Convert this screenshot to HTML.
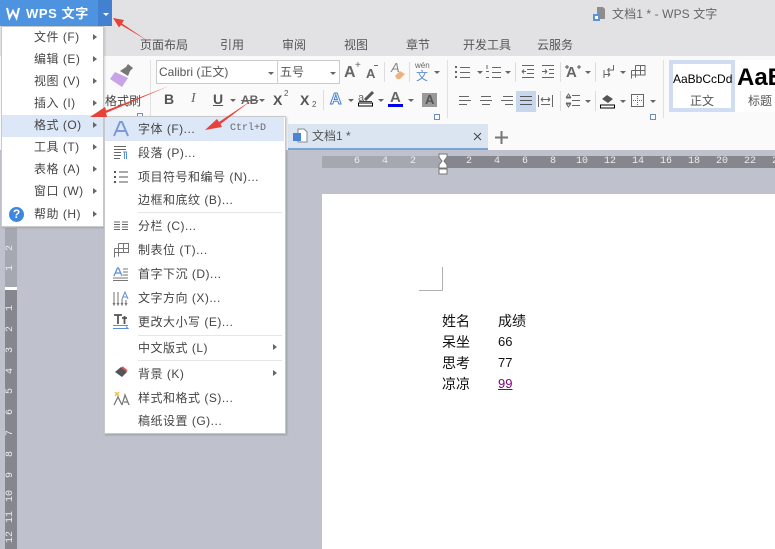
<!DOCTYPE html>
<html><head><meta charset="utf-8">
<style>
html,body{margin:0;padding:0}
body{width:775px;height:549px;overflow:hidden;position:relative;background:#bfc2cc;font-family:"Liberation Sans","WenQuanYi Zen Hei","Noto Sans CJK SC",sans-serif;font-size:12px;color:#444}
.a{position:absolute}
.t{position:absolute;white-space:nowrap;line-height:16px;color:#454545}
.m{font-size:12px;letter-spacing:.5px}
.tab{position:absolute;top:37px;font-size:12px;line-height:16px;color:#555;white-space:nowrap}
.arr{position:absolute;width:0;height:0;border-left:4px solid #666;border-top:3.5px solid transparent;border-bottom:3.5px solid transparent}
.dd{position:absolute;width:0;height:0;border-top:3px solid #666;border-left:3px solid transparent;border-right:3px solid transparent}
.sep{position:absolute;background:#e6e6e6}
.vs{position:absolute;width:1px;height:20px;background:#ddd}
.lc{position:absolute;width:4px;height:4px;border:1px solid #6b8fc5;border-top-color:#6b8fc5}
.r{position:absolute;font-size:10px;color:#eee;line-height:12px;top:156px;width:20px;text-align:center;font-family:"Liberation Mono",monospace}
.v{position:absolute;left:5px;width:12px;height:12px;font-size:10px;color:#eee;line-height:12px;text-align:center;transform:rotate(-90deg);font-family:"Liberation Mono",monospace}
svg{position:absolute;overflow:visible}
</style></head><body>
<div class="a" style="left:0;top:0;width:775px;height:56px;background:#e2e2e4"></div>
<div class="a" style="left:0;top:56px;width:775px;height:94px;background:#fafafa"></div>

<div class="a" style="left:0;top:0;width:98px;height:26px;background:#4e93e0"></div>
<div class="a" style="left:98px;top:0;width:14px;height:26px;background:#4380d0"></div>
<svg style="left:6px;top:7px" width="14" height="13"><path d="M1 1 L3.500 11 L7 4 L10.500 11 L13 1" fill="none" stroke="#fff" stroke-width="2"/></svg>
<div class="t" style="left:26px;top:6px;color:#fff;font-size:13px;font-weight:bold;letter-spacing:.6px">WPS 文字</div>
<div class="dd" style="left:103px;top:13px;border-top-color:#fff"></div>

<svg style="left:592px;top:6px" width="14" height="15"><path d="M5 1h6l2 2v10H5z" fill="#8d8d8d"/><rect x="1" y="8" width="7" height="7" fill="#5b93d8"/><rect x="3" y="10" width="3" height="3" fill="#fff"/></svg>
<div class="t" style="left:612px;top:6px;color:#666;letter-spacing:.1px">文档1 * - WPS 文字</div>

<div class="tab" style="left:140px">页面布局</div>
<div class="tab" style="left:220px">引用</div>
<div class="tab" style="left:282px">审阅</div>
<div class="tab" style="left:344px">视图</div>
<div class="tab" style="left:406px">章节</div>
<div class="tab" style="left:463px">开发工具</div>
<div class="tab" style="left:537px">云服务</div>

<!-- ribbon left -->
<svg style="left:108px;top:62px" width="30" height="30"><path d="M12 9l6-4 2-3 5 4-3 3-2 5z" fill="#777"/><path d="M7 10l13 6-6 9-12-8z" fill="#c9a3e8"/></svg>
<div class="t" style="left:105px;top:93px">格式刷</div>
<div class="lc" style="left:137px;top:113px"></div>
<div class="a" style="left:150px;top:60px;width:1px;height:58px;background:#e2e2e2"></div>
<div class="a" style="left:156px;top:60px;width:120px;height:22px;border:1px solid #ccc;background:#fff"></div>
<div class="a" style="left:277px;top:60px;width:61px;height:22px;border:1px solid #ccc;border-left:1px solid #ccc;background:#fff"></div>
<div class="t" style="left:159px;top:64px;color:#555">Calibri (正文)</div>
<div class="dd" style="left:268px;top:72px"></div>
<div class="t" style="left:280px;top:64px;color:#555">五号</div>
<div class="dd" style="left:330px;top:72px"></div>
<div class="t" style="left:344px;top:65px;font-size:16px;font-weight:bold;color:#666">A</div>
<div class="t" style="left:355px;top:58px;font-size:10px;color:#666">+</div>
<div class="t" style="left:366px;top:66px;font-size:13px;font-weight:bold;color:#666">A</div>
<div class="a" style="left:374px;top:65px;width:4px;height:1px;background:#666"></div>
<div class="vs" style="left:384px;top:62px"></div>
<div class="t" style="left:391px;top:60px;font-size:13px;font-style:italic;color:#888">A</div>
<svg style="left:394px;top:70px" width="12" height="10"><path d="M1 6l5-5 5 3-5 5H3z" fill="#efb27a"/></svg>
<div class="vs" style="left:409px;top:62px"></div>
<div class="t" style="left:415px;top:61px;font-size:8px;color:#666;line-height:10px">wén</div>
<div class="t" style="left:416px;top:68px;font-size:12px;color:#5c8fd6">文</div>
<div class="dd" style="left:434px;top:71px"></div>

<div class="t" style="left:164px;top:91px;font-size:14px;font-weight:bold;color:#555">B</div>
<div class="t" style="left:191px;top:91px;font-size:14px;font-style:italic;font-family:'Liberation Serif',serif;color:#666">I</div>
<div class="t" style="left:213px;top:91px;font-size:14px;font-weight:bold;color:#555;text-decoration:underline">U</div>
<div class="dd" style="left:230px;top:99px"></div>
<div class="t" style="left:241px;top:92px;font-size:12px;font-weight:bold;color:#666;text-decoration:line-through">AB</div>
<div class="dd" style="left:259px;top:99px"></div>
<div class="t" style="left:273px;top:92px;font-size:14px;font-weight:bold;color:#555">X</div>
<div class="t" style="left:284px;top:86px;font-size:8px;color:#555">2</div>
<div class="t" style="left:300px;top:92px;font-size:14px;font-weight:bold;color:#555">X</div>
<div class="t" style="left:312px;top:97px;font-size:8px;color:#555">2</div>
<div class="vs" style="left:323px;top:90px"></div>
<div class="t" style="left:330px;top:92px;font-size:16px;font-weight:bold;color:#fff;-webkit-text-stroke:1px #4a7fd0">A</div>
<div class="dd" style="left:348px;top:99px"></div>
<div class="t" style="left:358px;top:90px;font-size:11px;color:#666">a</div>
<svg style="left:358px;top:88px" width="16" height="19"><path d="M7 12L15 4" stroke="#555" stroke-width="3"/><path d="M1 13.500h13" stroke="#444"/><rect x="0.500" y="15" width="14" height="3" fill="#fff" stroke="#000"/></svg>
<div class="dd" style="left:378px;top:99px"></div>
<div class="t" style="left:390px;top:90px;font-size:15px;font-weight:bold;color:#666">A</div>
<div class="a" style="left:388px;top:104px;width:15px;height:3px;background:#0000e6"></div>
<div class="dd" style="left:408px;top:99px"></div>
<div class="a" style="left:422px;top:93px;width:15px;height:14px;background:#999"></div>
<div class="t" style="left:425px;top:92px;font-size:13px;font-weight:bold;color:#555">A</div>
<div class="lc" style="left:434px;top:114px"></div>
<div class="a" style="left:447px;top:60px;width:1px;height:58px;background:#e0e0e0"></div>

<!-- paragraph group -->
<div class="a" style="left:516px;top:91px;width:20px;height:21px;background:#c6d7ee"></div>
<svg style="left:0;top:0;fill:none;stroke:#666" width="775" height="150">
<path d="M456 66v2M456 71v2M456 76v2" stroke-width="2"/><path d="M460 67.500h10M460 72.500h10M460 77.500h10"/>
<path d="M487 65v4M486 71.500h3M486 77.500h3" /><path d="M492 67.500h9M492 72.500h9M492 77.500h9"/>
<path d="M522 65.500h12M527 69.500h7M527 73.500h7M522 77.500h12M522 71.500h4M522 71.500l2-2M522 71.500l2 2"/>
<path d="M542 65.500h12M549 69.500h5M549 73.500h5M542 77.500h12M542 71.500h5M547 71.500l-2-2M547 71.500l-2 2"/>
<path d="M613.500 65v5h-6M607.500 70l2-2M607.500 70l2 2M604 74.500h6M610 74.500l-2-2M610 74.500l-2 2M604 70v8"/>
<path d="M635.500 65.500h9.500v9.500h-13M631.500 70.500h13.500M635.500 65.500v12M640.500 65.500v9.500M631.500 70.500v8"/>
<path d="M459 96.500h10M459 100.500h12M459 104.500h8"/>
<path d="M481 96.500h10M480 100.500h12M482 104.500h8"/>
<path d="M503 96.500h10M501 100.500h12M505 104.500h8"/>
<path d="M520 96.500h12M520 100.500h12M520 104.500h12" stroke="#555"/>
<path d="M538.500 95v12M552.500 95v12M541 99.500h9M541 99.500l2-2M541 99.500l2 2M550 99.500l-2-2M550 99.500l-2 2M541 104.500h9"/>
<path d="M572 95.500h8M572 100.500h8M572 105.500h8M566 98h5M566 103h5M568.500 94l-2 3h4zM568.500 107l-2-3h4z"/>
<rect x="631.500" y="94.500" width="12" height="12"/>
<path d="M637.500 96v9M633 100.500h9" stroke-dasharray="1 1"/>
</svg>
<div class="dd" style="left:477px;top:71px"></div>
<div class="dd" style="left:505px;top:71px"></div>
<div class="vs" style="left:515px;top:62px"></div>
<div class="vs" style="left:560px;top:62px"></div>
<div class="vs" style="left:560px;top:91px"></div>
<div class="t" style="left:566px;top:65px;font-size:15px;font-weight:bold;color:#666">A</div>
<svg style="left:565px;top:64px;fill:none;stroke:#555" width="18" height="8"><path d="M0 3h4M2 1v4M12 3h4M14 1v4"/></svg>
<div class="dd" style="left:585px;top:71px"></div>
<div class="dd" style="left:585px;top:100px"></div>
<div class="vs" style="left:595px;top:62px"></div>
<div class="vs" style="left:595px;top:91px"></div>
<div class="dd" style="left:620px;top:71px"></div>
<svg style="left:600px;top:93px" width="16" height="16"><path d="M2 6l5-4 6 4-5 4z" fill="#555"/><rect x="0.500" y="12" width="14" height="3" fill="#fff" stroke="#000"/></svg>
<div class="dd" style="left:620px;top:100px"></div>
<div class="dd" style="left:650px;top:100px"></div>
<div class="lc" style="left:650px;top:114px"></div>
<div class="a" style="left:663px;top:60px;width:1px;height:58px;background:#e0e0e0"></div>

<!-- styles -->
<div class="a" style="left:669px;top:60px;width:106px;height:52px;background:#d0dcf2"></div>
<div class="a" style="left:673px;top:64px;width:58px;height:44px;background:#fff"></div>
<div class="a" style="left:735px;top:60px;width:40px;height:52px;background:#fff"></div>
<div class="t" style="left:673px;top:71px;color:#000;font-size:12px">AaBbCcDd</div>
<div class="t" style="left:690px;top:93px;color:#555">正文</div>
<div class="t" style="left:737px;top:63px;color:#000;font-size:24px;line-height:30px;font-weight:bold">AaB</div>
<div class="t" style="left:748px;top:93px;color:#555">标题</div>

<!-- doc tab -->
<div class="a" style="left:288px;top:124px;width:200px;height:24px;background:#dbe5f1;border-bottom:2px solid #7aa3d8"></div>
<svg style="left:293px;top:128px" width="16" height="15"><path d="M5 1h6l3 3v10H5z" fill="#fff" stroke="#888"/><rect x="0" y="5" width="8" height="8" fill="#4a85d4"/></svg>
<div class="t" style="left:312px;top:128px;color:#555">文档1 *</div>
<svg style="left:473px;top:132px" width="9" height="9"><path d="M1 1l7 7M8 1l-7 7" stroke="#444" fill="none"/></svg>
<svg style="left:495px;top:131px" width="13" height="13"><path d="M0 6.500h13M6.500 0v13" stroke="#777" stroke-width="2" fill="none"/></svg>

<!-- ruler -->
<div class="a" style="left:322px;top:156px;width:120px;height:12px;background:#a5a8b0"></div>
<div class="a" style="left:442px;top:156px;width:333px;height:12px;background:#85868e"></div>
<div class="r" style="left:347px">6</div><div class="r" style="left:375px">4</div><div class="r" style="left:403px">2</div>
<div class="r" style="left:459px">2</div><div class="r" style="left:487px">4</div><div class="r" style="left:515px">6</div><div class="r" style="left:543px">8</div>
<div class="r" style="left:572px">10</div><div class="r" style="left:600px">12</div><div class="r" style="left:628px">14</div><div class="r" style="left:656px">16</div><div class="r" style="left:684px">18</div><div class="r" style="left:712px">20</div><div class="r" style="left:740px">22</div><div class="r" style="left:768px">24</div>
<svg style="left:438px;top:153px" width="10" height="22"><path d="M1 1h8v3l-3 4 3 4v3H1v-3l3-4-3-4z" fill="#fff" stroke="#777"/><rect x="1" y="16" width="8" height="5" fill="#fff" stroke="#777"/></svg>

<!-- v ruler -->
<div class="a" style="left:5px;top:228px;width:12px;height:60px;background:#a5a8b0"></div>
<div class="a" style="left:5px;top:287px;width:12px;height:3px;background:#fff"></div>
<div class="a" style="left:5px;top:290px;width:12px;height:259px;background:#85868e"></div>
<div class="v" style="top:242px">2</div><div class="v" style="top:262px">1</div>
<div class="v" style="top:302px">1</div><div class="v" style="top:323px">2</div><div class="v" style="top:344px">3</div><div class="v" style="top:365px">4</div><div class="v" style="top:385px">5</div><div class="v" style="top:406px">6</div><div class="v" style="top:427px">7</div><div class="v" style="top:448px">8</div><div class="v" style="top:469px">9</div><div class="v" style="top:490px">10</div><div class="v" style="top:511px">11</div><div class="v" style="top:531px">12</div>

<!-- page -->
<div class="a" style="left:322px;top:194px;width:453px;height:355px;background:#fff"></div>
<div class="a" style="left:419px;top:267px;width:23px;height:23px;border-right:1px solid #b0b0b0;border-bottom:1px solid #b0b0b0"></div>
<div class="t" style="left:442px;top:313px;font-size:14px;color:#111">姓名</div>
<div class="t" style="left:498px;top:313px;font-size:14px;color:#111">成绩</div>
<div class="t" style="left:442px;top:334px;font-size:14px;color:#111">呆坐</div>
<div class="t" style="left:498px;top:334px;font-size:13px;color:#111">66</div>
<div class="t" style="left:442px;top:355px;font-size:14px;color:#111">思考</div>
<div class="t" style="left:498px;top:355px;font-size:13px;color:#111">77</div>
<div class="t" style="left:442px;top:376px;font-size:14px;color:#111">凉凉</div>
<div class="t" style="left:498px;top:376px;font-size:13px;color:#800080;text-decoration:underline">99</div>

<!-- left menu -->
<div class="a" style="left:1px;top:26px;width:103px;height:201px;background:#fff;border:1px solid #c9c9c9;box-sizing:border-box;box-shadow:1px 1px 2px rgba(0,0,0,.15)"></div>
<div class="a" style="left:2px;top:115px;width:101px;height:22px;background:#dce8f8"></div>
<div class="t m" style="left:34px;top:29px">文件 (F)</div><div class="arr" style="left:93px;top:34px"></div>
<div class="t m" style="left:34px;top:51px">编辑 (E)</div><div class="arr" style="left:93px;top:56px"></div>
<div class="t m" style="left:34px;top:73px">视图 (V)</div><div class="arr" style="left:93px;top:78px"></div>
<div class="t m" style="left:34px;top:95px">插入 (I)</div><div class="arr" style="left:93px;top:100px"></div>
<div class="t m" style="left:34px;top:117px">格式 (O)</div><div class="arr" style="left:93px;top:122px"></div>
<div class="t m" style="left:34px;top:139px">工具 (T)</div><div class="arr" style="left:93px;top:144px"></div>
<div class="t m" style="left:34px;top:161px">表格 (A)</div><div class="arr" style="left:93px;top:166px"></div>
<div class="t m" style="left:34px;top:183px">窗口 (W)</div><div class="arr" style="left:93px;top:188px"></div>
<div class="t m" style="left:34px;top:206px">帮助 (H)</div><div class="arr" style="left:93px;top:211px"></div>
<div class="a" style="left:9px;top:207px;width:15px;height:15px;border-radius:50%;background:#3f86dd;color:#fff;font-size:12px;font-weight:bold;line-height:15px;text-align:center">?</div>

<!-- sub menu -->
<div class="a" style="left:104px;top:116px;width:182px;height:318px;background:#fff;border:1px solid #c9c9c9;box-sizing:border-box;box-shadow:1px 1px 2px rgba(0,0,0,.2)"></div>
<div class="a" style="left:105px;top:117px;width:179px;height:24px;background:#dce8f8"></div>
<div class="t m" style="left:138px;top:121px">字体 (F)...</div>
<div class="t" style="left:230px;top:121px;font-family:'Liberation Mono',monospace;font-size:10px;color:#666">Ctrl+D</div>
<div class="t m" style="left:138px;top:145px">段落 (P)...</div>
<div class="t m" style="left:138px;top:169px">项目符号和编号 (N)...</div>
<div class="t m" style="left:138px;top:192px">边框和底纹 (B)...</div>
<div class="sep" style="left:138px;top:212px;width:144px;height:1px"></div>
<div class="t m" style="left:138px;top:218px">分栏 (C)...</div>
<div class="t m" style="left:138px;top:242px">制表位 (T)...</div>
<div class="t m" style="left:138px;top:266px">首字下沉 (D)...</div>
<div class="t m" style="left:138px;top:290px">文字方向 (X)...</div>
<div class="t m" style="left:138px;top:314px">更改大小写 (E)...</div>
<div class="sep" style="left:138px;top:335px;width:144px;height:1px"></div>
<div class="t m" style="left:138px;top:340px">中文版式 (L)</div><div class="arr" style="left:273px;top:344px"></div>
<div class="sep" style="left:138px;top:360px;width:144px;height:1px"></div>
<div class="t m" style="left:138px;top:366px">背景 (K)</div><div class="arr" style="left:273px;top:370px"></div>
<div class="t m" style="left:138px;top:390px">样式和格式 (S)...</div>
<div class="t m" style="left:138px;top:413px">稿纸设置 (G)...</div>

<!-- sub menu icons -->
<svg style="left:112px;top:120px" width="18" height="18"><path d="M2 16L8 2h2l6 14M5 11h8" fill="none" stroke="#7d9ad8" stroke-width="2"/></svg>
<svg style="left:113px;top:145px;fill:none;stroke:#666" width="16" height="15"><path d="M1 1.500h12M1 4.500h12M1 7.500h7M1 10.500h7M1 13.500h6"/><path d="M10 7h4M11.500 7v7M13.500 7v7" stroke="#5c8fd6"/></svg>
<svg style="left:114px;top:170px;fill:none;stroke:#555" width="15" height="14"><path d="M1 1v2M1 6v2M1 11v2" stroke-width="2"/><path d="M5 2h9M5 7h9M5 12h9"/></svg>
<svg style="left:114px;top:221px;fill:none;stroke:#666" width="14" height="10"><path d="M0 1h6M0 3.500h6M0 6h6M0 8.500h6M8 1h6M8 3.500h6M8 6h6M8 8.500h6"/></svg>
<svg style="left:114px;top:243px;fill:none;stroke:#777" width="15" height="15"><path d="M4.500 .5h10v9h-14M.5 5.500h14M4.500 .5v9M9.500 .5v9M.5 5.500v9M4.500 9.500v4"/></svg>
<svg style="left:113px;top:267px;fill:none" width="16" height="15"><path d="M1 9L4.500 1h1L9 9M3 6h5" stroke="#5c8fd6" stroke-width="1.300"/><path d="M10 2h5M10 5h5M10 8h5M0 11h15M0 13.500h15" stroke="#777"/></svg>
<svg style="left:113px;top:291px;fill:none;stroke:#777" width="16" height="15"><path d="M1 1v13M5 1v13M9 8v6M13 9v5M0 12l1 2 1-2M4 12l1 2 1-2M8 12l1 2 1-2M12 12l1 2 1-2"/><path d="M9 8L12 1l3 7M10 6h4" stroke="#5c8fd6"/></svg>
<svg style="left:113px;top:313px;fill:none" width="16" height="17"><path d="M1 2h8M5 2v9M9 5h5M11.500 3v8" stroke="#555" stroke-width="1.800"/><path d="M0 12.500h15M0 15.500h15l-2-2" stroke="#5c8fd6"/></svg>
<svg style="left:114px;top:366px" width="15" height="13"><path d="M1 6l6-5 6 5-5 5z" fill="#555"/><path d="M8 1l5 4" stroke="#e0555a" stroke-width="2"/></svg>
<svg style="left:113px;top:390px;fill:none" width="17" height="16"><path d="M2 2l4 4M6 2l-4 4" stroke="#f0c040" stroke-width="1.500"/><path d="M1 15l4-8 4 8M9 15l3-10 4 10M11 12h4" stroke="#777" stroke-width="1.300"/></svg>

<!-- red arrows -->
<svg style="left:0;top:0;pointer-events:none" width="775" height="549">
<polygon points="148,41 122,23.500 124,20 113,18 119,27.500 121,25" fill="#e8413a"/>
<polygon points="169,86 106,110.500 105,107 90,117 107,117 106,113" fill="#e8413a"/>
<polygon points="252,100 219,122 217,119 205,130 222,127 220.500,124" fill="#e8413a"/>
</svg>
</body></html>
